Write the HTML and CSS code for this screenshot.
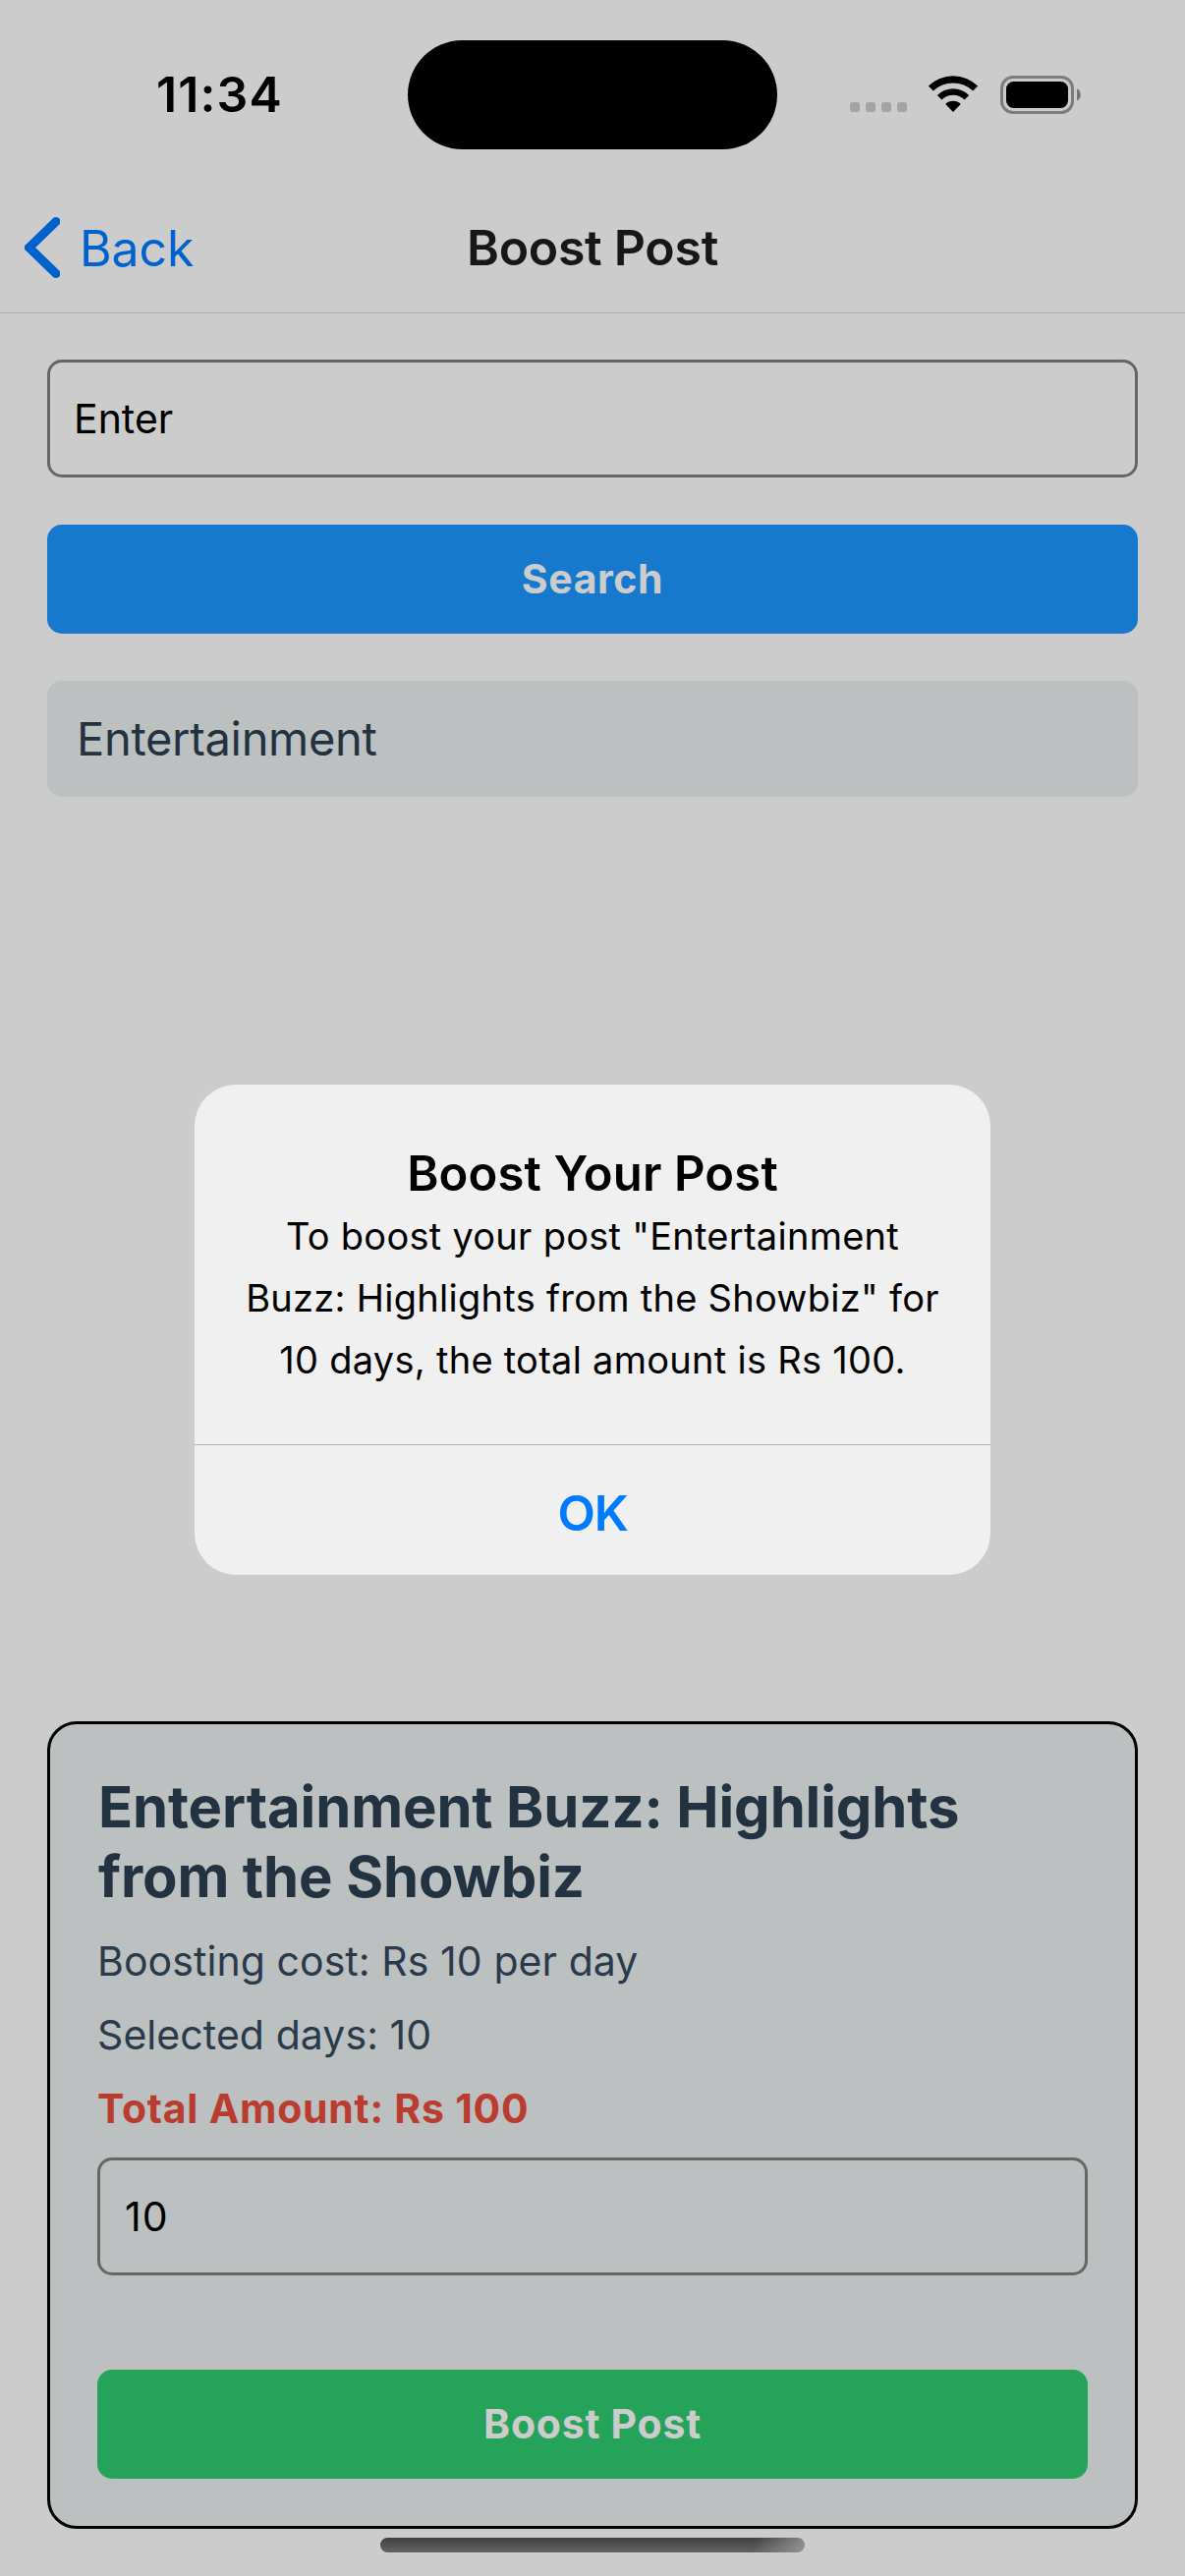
FILE: index.html
```html
<!DOCTYPE html>
<html lang="en">
<head>
<meta charset="utf-8">
<title>Boost Post</title>
<link rel="stylesheet" href="styles.css">
</head>
<body>
<div class="screen">
  <div class="status-bar">
    <div class="time">11:34</div>
    <div class="island"></div>
    <div class="indicators">
      <div class="dots"><i></i><i></i><i></i><i></i></div>
      <svg class="wifi" width="52" height="38" viewBox="0 0 52 38">
        <path d="M0.8 10.6A36 36 0 0 1 51.2 10.6L46.2 15.6A29 29 0 0 0 5.8 15.6Z"/>
        <path d="M9.8 19.9A23 23 0 0 1 42.2 19.9L37.6 24.6A16.4 16.4 0 0 0 14.4 24.6Z"/>
        <path d="M18.2 29A10.8 10.8 0 0 1 33.8 29L26 37Z"/>
      </svg>
      <svg class="battery" width="83" height="39" viewBox="0 0 83 39">
        <rect class="shell" x="1.5" y="1.5" width="72" height="36" rx="11.5"/>
        <rect x="6" y="6" width="63" height="27" rx="7.5"/>
        <path class="nub" d="M78 13.2A7 7 0 0 1 78 25.6Z"/>
      </svg>
    </div>
  </div>

  <header class="nav">
    <a class="back">
      <svg width="36" height="62" viewBox="0 0 36 62"><path d="M32 4.5L4.6 31L32 57.5"/></svg>
      <span>Back</span>
    </a>
    <h1>Boost Post</h1>
  </header>

  <main class="content">
    <div class="field">Enter</div>
    <div class="button search">Search</div>
    <div class="result">Entertainment</div>

    <section class="card">
      <h2>Entertainment Buzz: Highlights<br>from the Showbiz</h2>
      <p>Boosting cost: Rs 10 per day</p>
      <p>Selected days: 10</p>
      <p class="total">Total Amount: Rs 100</p>
      <div class="field days">10</div>
      <div class="button boost">Boost Post</div>
    </section>
  </main>

  <div class="home-indicator"></div>

  <div class="overlay">
    <div class="alert">
      <div class="alert-body">
        <h3>Boost Your Post</h3>
        <p>To boost your post "Entertainment<br>Buzz: Highlights from the Showbiz" for<br>10 days, the total amount is Rs 100.</p>
      </div>
      <div class="alert-action">OK</div>
    </div>
  </div>
</div>
</body>
</html>
```
FILE: styles.css
```css
* {
  box-sizing: border-box;
}

body {
  margin: 0;
  background: #ccc;
  font-family: Inter, "Liberation Sans", sans-serif;
}

h1, h2, h3, p {
  margin: 0;
}

.screen {
  position: relative;
  display: flex;
  flex-direction: column;
  width: 1206px;
  height: 2622px;
  background: #ccc;
}

/* Status bar */
.status-bar {
  display: grid;
  grid-template-columns: 415px 376px 415px;
  align-items: center;
  height: 192px;
}

.time {
  padding-left: 159px;
  font-size: 50px;
  font-weight: 600;
  line-height: 60px;
  letter-spacing: 1.1px;
}

.island {
  height: 111px;
  margin-top: 1px;
  border-radius: 56px;
  background: #000;
}

.indicators {
  display: flex;
  align-items: center;
  padding-left: 74px;
}

.dots {
  display: flex;
  gap: 6px;
  margin-top: 26px;
  margin-right: 21px;
}

.dots i {
  width: 10px;
  height: 10px;
  border-radius: 3px;
  background: #a3a3a3;
}

.wifi {
  margin-right: 22px;
}

.battery .shell {
  fill: none;
  stroke: #7d7d7d;
  stroke-width: 3;
}

.battery .nub {
  fill: #757575;
}

/* Navigation header */
.nav {
  display: grid;
  grid-template-columns: 1fr auto 1fr;
  align-items: center;
  height: 127px;
  padding-bottom: 6px;
  border-bottom: 1px solid #b0b0b1;
}

.back {
  display: flex;
  align-items: center;
  gap: 20px;
  padding-left: 25px;
  color: #0062cc;
  font-size: 50px;
  line-height: 60px;
  letter-spacing: -0.1px;
}

.back span {
  padding-top: 2px;
}

.back path {
  fill: none;
  stroke: #0062cc;
  stroke-width: 9;
  stroke-linecap: round;
}

h1 {
  color: #171718;
  font-size: 50px;
  font-weight: 600;
  line-height: 60px;
  letter-spacing: -0.3px;
}

/* Page content */
.content {
  display: flex;
  flex: 1;
  flex-direction: column;
  padding: 47px 48px 48px;
}

.field {
  height: 120px;
  padding-left: 24px;
  border: 3px solid #666;
  border-radius: 15px;
  color: #000;
  font-size: 41px;
  line-height: 114px;
}

.button {
  height: 111px;
  border-radius: 15px;
  color: #ccc;
  font-size: 41px;
  font-weight: 700;
  line-height: 111px;
  letter-spacing: 0.6px;
  text-align: center;
}

.search {
  margin-top: 48px;
  background: #1679ce;
}

.result {
  height: 118px;
  margin-top: 48px;
  padding-left: 30px;
  border-radius: 15px;
  background: #bcc0c1;
  color: #233240;
  font-size: 47px;
  line-height: 118px;
  letter-spacing: -0.31px;
}

.card {
  display: flex;
  flex-direction: column;
  gap: 25px;
  margin-top: auto;
  padding: 49px 48px 48px;
  border: 3px solid #000;
  border-radius: 30px;
  background: #bcc0c1;
}

h2 {
  padding-left: 1px;
  color: #233240;
  font-size: 58px;
  font-weight: 700;
  line-height: 71px;
  letter-spacing: -0.13px;
}

.card p {
  color: #2a3a4b;
  font-size: 41px;
  line-height: 50px;
  letter-spacing: 0.07px;
}

.card .total {
  color: #ba3c2f;
  font-weight: 700;
  letter-spacing: 0.75px;
}

.days {
  padding-left: 25px;
  letter-spacing: 1px;
}

.boost {
  margin-top: 71px;
  background: #26a35a;
  letter-spacing: 0.75px;
}

.home-indicator {
  position: absolute;
  bottom: 24px;
  left: 387px;
  width: 432px;
  height: 15px;
  border-radius: 8px;
  background:
    linear-gradient(100deg, transparent 88%, rgba(170, 170, 170, 0.7)),
    linear-gradient(#414141, #636363);
}

/* Alert */
.overlay {
  position: absolute;
  inset: 0;
  display: flex;
  align-items: flex-start;
  justify-content: center;
  padding-top: 1104px;
}

.alert {
  width: 810px;
  height: 499px;
  overflow: hidden;
  border-radius: 42px;
  background: #f0f0f0;
  color: #000;
  text-align: center;
}

.alert-body {
  height: 367px;
  padding-top: 61px;
  border-bottom: 1px solid #b1b1b2;
}

.alert h3 {
  font-size: 49px;
  font-weight: 600;
  line-height: 60px;
  letter-spacing: 0.14px;
}

.alert p {
  margin-top: 2px;
  font-size: 38px;
  line-height: 63px;
  letter-spacing: 0.27px;
}

.alert-action {
  color: #007aff;
  font-size: 50px;
  font-weight: 600;
  line-height: 138px;
  letter-spacing: -1.2px;
}
```
